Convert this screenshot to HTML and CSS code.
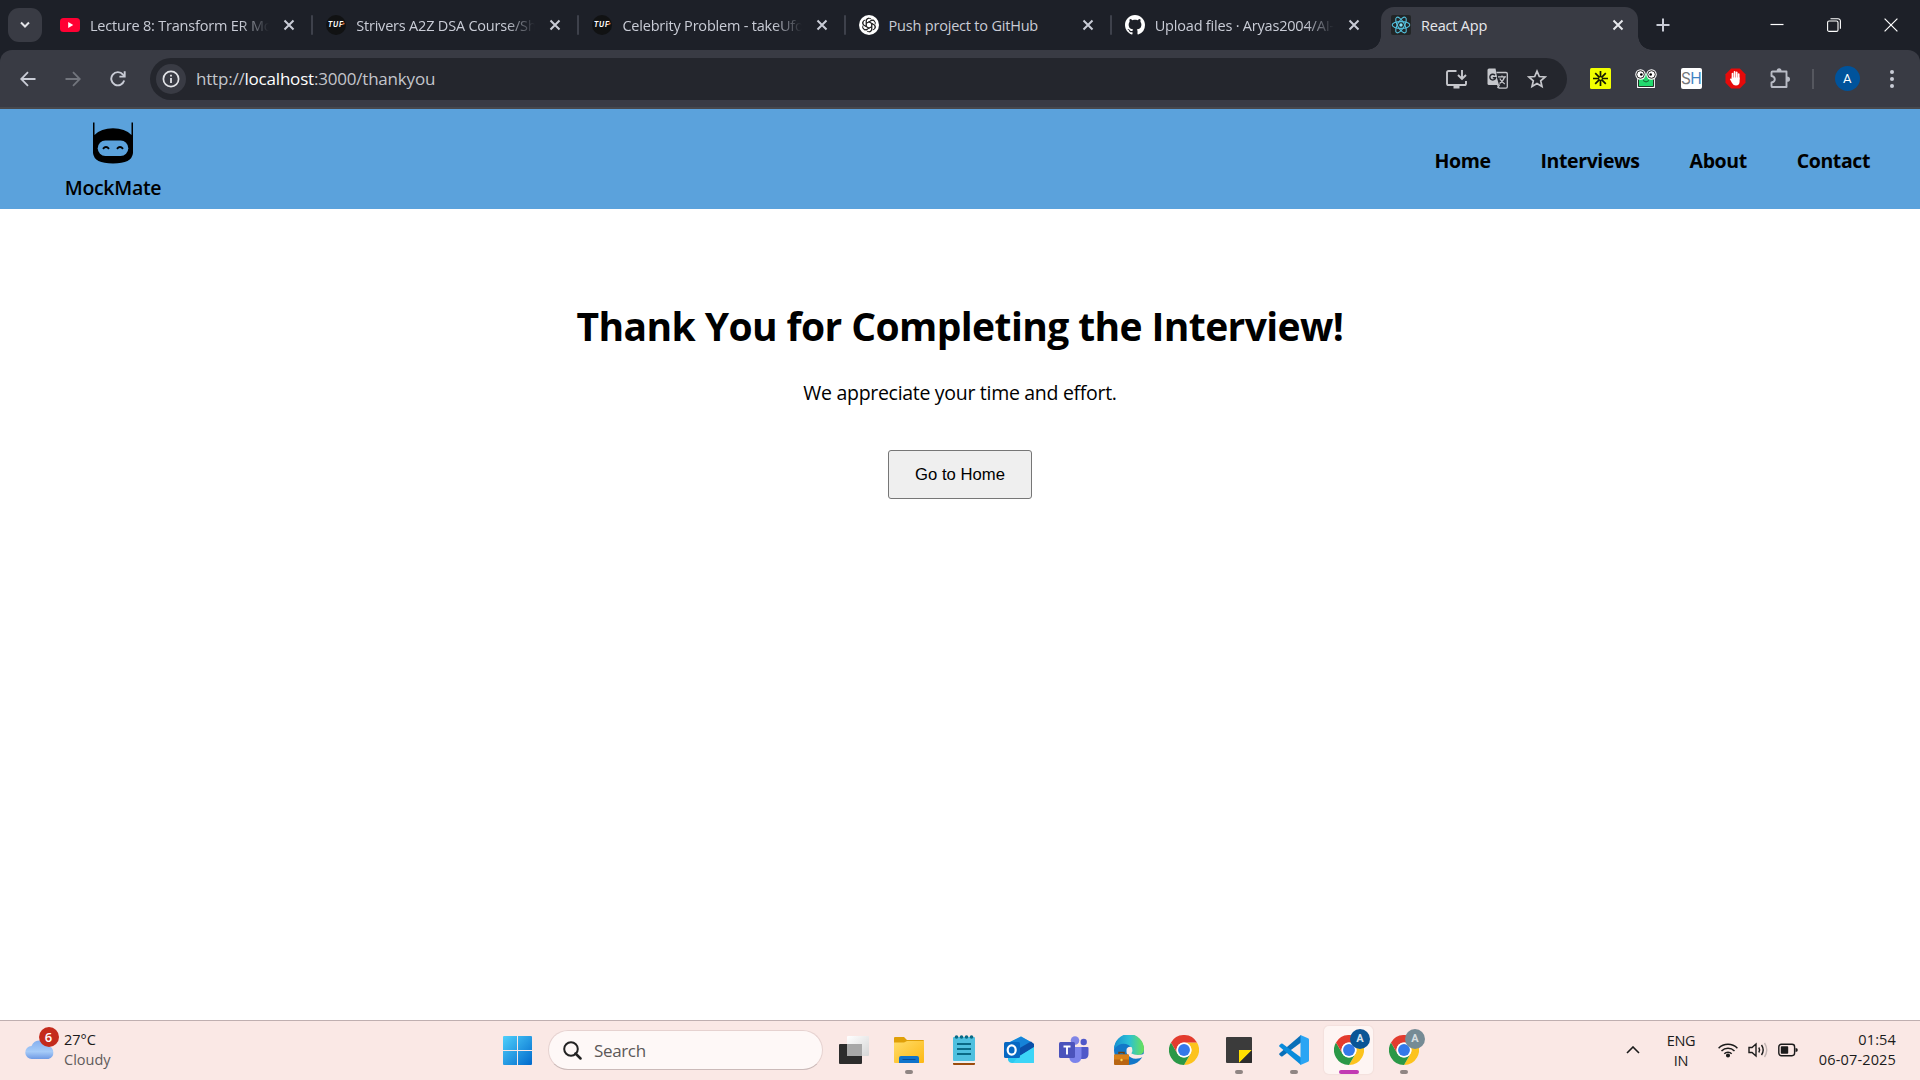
FILE: index.html
```html
<!DOCTYPE html>
<html lang="en">
<head>
<meta charset="utf-8">
<title>React App</title>
<link rel="stylesheet" href="styles.css">
</head>
<body>
<svg class="defs" aria-hidden="true">
  <symbol id="close" viewBox="0 0 12 12"><path d="M1.5 1.5l9 9M10.5 1.5l-9 9" fill="none" stroke="currentColor" stroke-width="2"/></symbol>
  <symbol id="tuf" viewBox="0 0 20 20"><circle cx="10" cy="10" r="10" fill="#111213"/><text x="1.8" y="12.3" font-size="7" font-style="italic" font-weight="700" font-family="Inter, sans-serif" fill="#fff" textLength="15">TUF</text><circle cx="17.6" cy="8.6" r="1.1" fill="#d8632c"/></symbol>
  <symbol id="chrome" viewBox="0 0 48 48">
    <path d="M24 12H44.8A24 24 0 0 1 24 48L34.4 30A12 12 0 0 0 24 12Z" fill="#fcc31d"/>
    <path d="M3.2 12A24 24 0 0 0 24 48L34.4 30A12 12 0 0 1 13.6 30Z" fill="#2a9847"/>
    <path d="M3.2 12 13.6 30A12 12 0 0 1 24 12H44.8A24 24 0 0 0 3.2 12Z" fill="#e33b2e"/>
    <circle cx="24" cy="24" r="12" fill="#fff"/><circle cx="24" cy="24" r="9.5" fill="#3479ea"/>
  </symbol>
</svg>

<div class="browser">
  <div class="tabstrip">
    <div class="tab-search"><svg width="12" height="8" viewBox="0 0 12 8"><path d="M2 1.5l4 4 4-4" fill="none" stroke="#e3e4e8" stroke-width="2"/></svg></div>
    <div class="tab">
      <svg class="fav" viewBox="0 0 20 20"><rect y="3" width="20" height="14" rx="3.5" fill="#ff0033"/><path d="M8.2 7v6l5-3z" fill="#fff"/></svg>
      <span class="title fade">Lecture 8: Transform ER Mod</span><svg class="x"><use href="#close"/></svg>
    </div>
    <div class="tab">
      <svg class="fav"><use href="#tuf"/></svg>
      <span class="title fade">Strivers A2Z DSA Course/Sh</span><svg class="x"><use href="#close"/></svg>
    </div>
    <div class="tab">
      <svg class="fav"><use href="#tuf"/></svg>
      <span class="title fade">Celebrity Problem - takeUfo</span><svg class="x"><use href="#close"/></svg>
    </div>
    <div class="tab">
      <svg class="fav" viewBox="0 0 20 20"><circle cx="10" cy="10" r="10" fill="#fff"/><g fill="none" stroke="#222" stroke-width=".95">
        <path id="petal" d="M7.3 11.6V6.1a2.9 2.9 0 0 1 5.2-1.7M7.3 8.3l4.8-2.7a2.6 2.6 0 0 1 3.8 1"/>
        <use href="#petal" transform="rotate(60 10 10)"/><use href="#petal" transform="rotate(120 10 10)"/><use href="#petal" transform="rotate(180 10 10)"/><use href="#petal" transform="rotate(240 10 10)"/><use href="#petal" transform="rotate(300 10 10)"/></g></svg>
      <span class="title">Push project to GitHub</span><svg class="x"><use href="#close"/></svg>
    </div>
    <div class="tab last">
      <svg class="fav" viewBox="0 0 16 16"><path fill="#fff" d="M8 0C3.58 0 0 3.58 0 8c0 3.54 2.29 6.53 5.47 7.59.4.07.55-.17.55-.38 0-.19-.01-.82-.01-1.49-2.01.37-2.53-.49-2.69-.94-.09-.23-.48-.94-.82-1.13-.28-.15-.68-.52-.01-.53.63-.01 1.08.58 1.23.82.72 1.21 1.87.87 2.33.66.07-.52.28-.87.51-1.07-1.78-.2-3.64-.89-3.64-3.95 0-.87.31-1.59.82-2.15-.08-.2-.36-1.02.08-2.12 0 0 .67-.21 2.2.82.64-.18 1.32-.27 2-.27s1.36.09 2 .27c1.53-1.04 2.2-.82 2.2-.82.44 1.1.16 1.92.08 2.12.51.56.82 1.27.82 2.15 0 3.07-1.87 3.75-3.65 3.95.29.25.54.73.54 1.48 0 1.07-.01 1.93-.01 2.2 0 .21.15.46.55.38A8.01 8.01 0 0 0 16 8c0-4.42-3.58-8-8-8z"/></svg>
      <span class="title fade">Upload files · Aryas2004/AI-</span><svg class="x"><use href="#close"/></svg>
    </div>
    <div class="tab active">
      <svg class="fav" viewBox="0 0 20 20"><rect width="20" height="20" rx="2" fill="#222526"/><g fill="none" stroke="#53c1de" stroke-width="1.1"><ellipse cx="10" cy="10" rx="8.8" ry="3.4"/><ellipse cx="10" cy="10" rx="8.8" ry="3.4" transform="rotate(60 10 10)"/><ellipse cx="10" cy="10" rx="8.8" ry="3.4" transform="rotate(120 10 10)"/></g><circle cx="10" cy="10" r="1.7" fill="#7fe3f8"/></svg>
      <span class="title">React App</span><svg class="x"><use href="#close"/></svg>
    </div>
    <div class="new-tab"><svg width="14" height="14" viewBox="0 0 14 14"><path d="M7 .5v13M.5 7h13" stroke="#c9ccd6" stroke-width="2"/></svg></div>
    <div class="window-buttons">
      <svg width="14" height="14" viewBox="0 0 14 14"><path d="M.5 6.5h13" stroke="#fff" stroke-width="1.2"/></svg>
      <svg width="14" height="14" viewBox="0 0 14 14" fill="none" stroke="#fff" stroke-width="1.1"><rect x=".6" y="3" width="10.4" height="10.4" rx="1.5"/><path d="M3.5 .7H11a2.4 2.4 0 0 1 2.4 2.4v7.6"/></svg>
      <svg width="14" height="14" viewBox="0 0 14 14"><path d="M.6.6l12.8 12.8M13.4.6.6 13.4" stroke="#fff" stroke-width="1.2"/></svg>
    </div>
  </div>

  <div class="toolbar">
    <div class="nav-buttons">
      <svg width="16" height="16" viewBox="0 0 16 16" fill="none" stroke="#c9ccd6" stroke-width="1.8"><path d="M15.5 8H1.5M8 1.2 1.2 8 8 14.8"/></svg>
      <svg width="16" height="16" viewBox="0 0 16 16" fill="none" stroke="#72757d" stroke-width="1.8"><path d="M.5 8h14M8 1.2 14.8 8 8 14.8"/></svg>
      <svg width="16" height="16" viewBox="0 0 16 16" fill="none" stroke="#c9ccd6" stroke-width="1.9"><path d="M14.2 9.6A6.6 6.6 0 1 1 13 3.6L14.2 5"/><path d="M14.7.3v5.3H9.4"/></svg>
    </div>
    <div class="omnibox">
      <span class="info"><svg width="18" height="18" viewBox="0 0 18 18"><circle cx="9" cy="9" r="7.6" fill="none" stroke="#e2e3e7" stroke-width="1.7"/><path d="M9 8v5M9 4.8v1.8" stroke="#e2e3e7" stroke-width="1.8"/></svg></span>
      <span class="url">http://<b>localhost</b>:3000/thankyou</span>
      <div class="omni-icons">
        <svg width="21" height="20" viewBox="0 0 21 20" fill="none" stroke="#c6c7cc" stroke-width="1.9"><path d="M10.5 2H2.6Q1 2 1 3.6V14.4Q1 16 2.6 16H18.4Q20 16 20 14.4V12M16 1v8.5M12 6l4 4 4-4"/><path d="M7.5 18h6" stroke-width="3"/></svg>
        <svg width="21" height="21" viewBox="0 0 21 21"><path d="M2 .5h6.500l3.500 16.500H2Q.5 17 .5 15.500V2Q.5.5 2 .5Z" fill="#c6c7cc"/><path d="M9.500 4.500h9.500q1.300 0 1.300 1.300v13q0 1.300-1.300 1.300h-7l-1.500-3.500" fill="#24262d" stroke="#c6c7cc" stroke-width="1.300"/><path d="M8 3.500 12 17H7Z" fill="#c6c7cc"/><path d="M8 7.200A2.900 2.900 0 1 0 8.600 9.800H5.800" fill="none" stroke="#24262d" stroke-width="1.400"/><path d="M11 8.800h8M15 7.500v1.300M17.500 9q-1 4-5 6.500M12.800 10.500q2 4 5 5.500M10.500 20l2.300-3.500" fill="none" stroke="#c6c7cc" stroke-width="1.200"/></svg>
        <svg width="20" height="20" viewBox="0 0 20 20"><path d="M10 2.200l2.300 5.300 5.800.5-4.400 3.800 1.300 5.700-5-3-5 3 1.300-5.700L1.900 8l5.800-.5z" fill="none" stroke="#c6c7cc" stroke-width="1.700"/></svg>
      </div>
    </div>
    <div class="extensions">
      <svg width="21" height="21" viewBox="0 0 21 21"><rect width="21" height="21" rx="1.500" fill="#f1ff00"/><g stroke="#141a00" stroke-width="1.700"><path d="M10.500 3v15M3 10.500h15M5.200 5.200l10.600 10.600M15.800 5.200 5.200 15.800"/></g><circle cx="10.500" cy="10.500" r="1.300" fill="#f1ff00"/></svg>
      <svg width="22" height="20" viewBox="0 0 22 20"><path d="M4.500 9H17.500L18.500 11V17.500H3.500V11Z" fill="#22d96e" stroke="#fff" stroke-width="2.800"/><path d="M4.500 9H17.500L18.500 11V17.500H3.500V11Z" fill="#22d96e" stroke="#172019" stroke-width=".9"/><path d="M7 9 11 4l4 5v3H7z" fill="#22d96e"/><g fill="#fff"><circle cx="5.500" cy="5.500" r="5.200"/><circle cx="16.500" cy="5.500" r="5.200"/></g><g fill="#fff" stroke="#222" stroke-width="1"><circle cx="5.500" cy="5.500" r="3.800"/><circle cx="16.500" cy="5.500" r="3.800"/></g><circle cx="6.300" cy="5.500" r="1.300"/><circle cx="15.700" cy="5.500" r="1.300"/><path d="M8 11.500q3 3 6 0" fill="none" stroke="#155c31"/></svg>
      <span class="sh"><i>S</i>H</span>
      <svg width="21" height="21" viewBox="0 0 21 21"><path d="M6.200.5h8.600l5.700 5.700v8.600l-5.700 5.700H6.200L.5 14.800V6.200z" fill="#e60a0a"/><path d="M7.500 11V5.500M9.600 10V3.800M11.700 10V4.300M13.700 11V6" stroke="#fff" stroke-width="1.700" stroke-linecap="round"/><path d="M6.700 9.500h7.900v4q0 4-3.600 4-2.600 0-4-2.500L4.800 11q.8-1.200 1.900 0z" fill="#fff"/></svg>
      <svg width="21" height="21" viewBox="0 0 21 21"><path d="M2.500 3.500H16.500V19H2.500Q1.500 19 1.500 18V14.500Q4.800 14 4.800 11.300T1.500 8V4.500Q1.500 3.500 2.500 3.500Z" fill="none" stroke="#b9bcc6" stroke-width="1.900" stroke-linejoin="round"/><path d="M6.700 3a2.400 2.700 0 0 1 4.800 0zM17 8.600a3 2.600 0 0 1 0 5.200z" fill="#b9bcc6"/></svg>
    </div>
    <span class="bar"></span>
    <span class="avatar">A</span>
    <svg class="dots" width="4" height="18" viewBox="0 0 4 18" fill="#c9ccd6"><circle cx="2" cy="2" r="2"/><circle cx="2" cy="9" r="2"/><circle cx="2" cy="16" r="2"/></svg>
  </div>
</div>

<header class="site-header">
  <div class="brand">
    <svg width="42" height="42" viewBox="0 0 42 42"><path d="M1 .5h1.500V13Q9 6.300 21 6.300T39.500 13V.5H41V31Q40 41.500 21 41.500T1 31Z"/><rect x="5.700" y="18.500" width="30.600" height="15.500" rx="7.700" fill="#5ba2dc"/><path d="M11 26.800q3-3.500 6 0M25 26.800q3-3.500 6 0" fill="none" stroke="#000" stroke-width="2"/></svg>
    <span>MockMate</span>
  </div>
  <nav><a>Home</a><a>Interviews</a><a>About</a><a>Contact</a></nav>
</header>

<main>
  <h1>Thank You for Completing the Interview!</h1>
  <p>We appreciate your time and effort.</p>
  <button type="button">Go to Home</button>
</main>

<footer class="taskbar">
  <div class="weather">
    <div class="cloud">
      <svg width="30" height="22" viewBox="0 0 30 22"><defs><linearGradient id="cl" x2="0" y2="1"><stop stop-color="#86b0ef"/><stop offset=".6" stop-color="#a6cbf8"/><stop offset="1" stop-color="#6f9ae4"/></linearGradient></defs><path d="M7 21a6.500 6.500 0 0 1-.5-13A9 9 0 0 1 23 8a6.700 6.700 0 0 1 .5 13z" fill="url(#cl)"/></svg>
      <span class="alert">6</span>
    </div>
    <div class="two"><span>27°C</span><span class="grey">Cloudy</span></div>
  </div>
  <div class="apps">
    <div class="app"><svg width="29" height="29" viewBox="0 0 29 29"><defs><linearGradient id="win" gradientUnits="userSpaceOnUse" x2="29" y2="29"><stop stop-color="#4fd0fb"/><stop offset="1" stop-color="#0069cc"/></linearGradient></defs><path d="M1 0h13v14H0V1q0-1 1-1ZM15 0h13q1 0 1 1v13H15zM0 15h14v14H1q-1 0-1-1zM15 15h14v13q0 1-1 1H15z" fill="url(#win)"/></svg></div>
    <div class="search"><svg width="19" height="19" viewBox="0 0 19 19" fill="none" stroke="#222" stroke-width="2"><circle cx="8" cy="8" r="6.800"/><path d="M12.500 12.500l5 5" stroke-width="2.500" stroke-linecap="round"/></svg><span>Search</span></div>
    <div class="app"><svg width="30" height="30" viewBox="0 0 30 30"><defs><linearGradient id="tv" x2="1" y2="1"><stop stop-color="#fff"/><stop offset="1" stop-color="#d6d6d6"/></linearGradient></defs><rect y="9" width="23" height="20" rx="1" fill="#2c2c2c"/><rect x="8" y="1" width="22" height="20" rx="1" fill="url(#tv)"/><rect x="8" y="9" width="15" height="12" fill="#a8a8a8"/></svg></div>
    <div class="app run"><svg width="30" height="30" viewBox="0 0 30 30"><defs><linearGradient id="fo" x2="1" y2="1"><stop stop-color="#ffdc68"/><stop offset="1" stop-color="#fdb813"/></linearGradient></defs><path d="M0 3Q0 2 1 2h9l3 3h16q1 0 1 1v6H0z" fill="#e0a008"/><path d="M0 7.500h10L13 6h17v21q0 1-1 1H1q-1 0-1-1z" fill="url(#fo)"/><path d="M5 28v-5q0-2 2-2h16q2 0 2 2v5z" fill="#0f73cb"/><path d="M8.500 24.500h13" stroke="#0a4c94"/></svg></div>
    <div class="app"><svg width="24" height="30" viewBox="0 0 24 30"><rect x="1" y="26" width="22" height="4" rx="1" fill="#9b4b0b"/><rect x="1" y="25" width="22" height="3" fill="#eee"/><rect x="1" y="2" width="22" height="24" rx="1" fill="#4fc0df"/><path d="M5 9h14M5 14h14M5 19h14" stroke="#0a6a86" stroke-width="1.800"/><g fill="#0a6a86"><circle cx="4.500" cy="2" r="1.800"/><circle cx="9.500" cy="2" r="1.800"/><circle cx="14.500" cy="2" r="1.800"/><circle cx="19.500" cy="2" r="1.800"/></g></svg></div>
    <div class="app"><svg width="30" height="30" viewBox="0 0 30 30"><path d="M4 8 17 1.500 30 9v18q0 1-1 1H8q-3 0-4-3z" fill="#2cc9f0"/><path d="M4 8 17 1.500 27 7 14 16 4 20z" fill="#1683d8"/><path d="M14 14 27 6.500 30 9v3.500L14 22z" fill="#0b4fa8"/><path d="M14 22 30 12v15q0 1-1 1H9z" fill="#3cd5f7"/><rect y="7" width="16" height="16" rx="1.500" fill="#0768c2"/><ellipse cx="7.700" cy="15" rx="4" ry="4.600" fill="none" stroke="#fff" stroke-width="2.200"/></svg></div>
    <div class="app"><svg width="30" height="30" viewBox="0 0 30 30"><circle cx="16" cy="5.500" r="4.300" fill="#8085e6"/><circle cx="24.700" cy="7" r="3.200" fill="#5059c9"/><path d="M20 12h8.500q1 0 1 1v6q0 5-5 5h-4.500z" fill="#5059c9"/><path d="M10 12h12.500v9q0 7-6 7-5.500 0-6.500-6z" fill="#7b83eb"/><rect y="7" width="16" height="16" rx="1.500" fill="#4b53bc"/><path d="M4.500 11.500h7M8 11.500V19.500" stroke="#fff" stroke-width="1.900"/></svg></div>
    <div class="app"><svg width="30" height="30" viewBox="0 0 30 30"><defs><linearGradient id="ed"><stop stop-color="#168fd0"/><stop offset=".5" stop-color="#2bbfd6"/><stop offset="1" stop-color="#6be255"/></linearGradient></defs><circle cx="15" cy="15" r="15" fill="#1277c8"/><path d="M0 14A15 15 0 0 1 30 14q0 6-6.500 6-4 0-6-1.500 2-5-3-8.500Q7 6 0 14Z" fill="url(#ed)"/><path d="M12.500 16a3.500 3.500 0 0 1 5.500-3.500q1 3-.5 6Q22 21 30 19v2.500q-8 4-13 1t-4.500-6.500Z" fill="#fbe9e6"/><rect y="19.500" width="15" height="10.500" rx="1" fill="#b86512"/><path d="M0 20.500q0-1 1-1h13q1 0 1 1v4H0z" fill="#d98018"/><path d="M5 19v-1.500h5V19" fill="none" stroke="#704010" stroke-width="1.500"/><circle cx="7.500" cy="25" r="1.200" fill="#ffd659"/></svg></div>
    <div class="app"><svg width="30" height="30"><use href="#chrome"/></svg></div>
    <div class="app run"><svg width="26" height="26" viewBox="0 0 26 26"><rect width="26" height="26" rx="1" fill="#3b3b3b"/><path d="M13 13h13L13 26z" fill="#ffe000"/><path d="M26 13v12q0 1-1 1H13z" fill="#2c2c2c"/></svg></div>
    <div class="app run"><svg width="30" height="30" viewBox="0 0 30 30"><path d="M.6 18.200Q-.3 19 .6 20L2 21.200q.8.500 1.600 0L22 7.500V0Z" fill="#0a6fb8"/><path d="M.6 11.800Q-.3 11 .6 10L2 8.800q.8-.5 1.600 0L22 22.500V30Z" fill="#0a8bdb"/><path d="M21.500 0 29 3.300q1 .4 1 1.500v20.400q0 1.100-1 1.500L21.500 30Z" fill="#2aa5f4"/></svg></div>
    <div class="app run current"><svg width="30" height="30"><use href="#chrome"/></svg><span class="badge">A</span></div>
    <div class="app run"><svg width="30" height="30"><use href="#chrome"/></svg><span class="badge grey-badge">A</span></div>
  </div>
  <div class="tray">
    <svg class="chev" width="14" height="8" viewBox="0 0 14 8"><path d="M1 7l6-6 6 6" fill="none" stroke="#1b1b1b" stroke-width="1.600"/></svg>
    <div class="two lang"><span>ENG</span><span>IN</span></div>
    <svg width="20" height="16" viewBox="0 0 20 16" fill="none" stroke="#1b1b1b" stroke-width="1.500"><path d="M.6 6.200a13.300 13.300 0 0 1 18.800 0M3.500 9a9.200 9.200 0 0 1 13 0M6.300 11.700a5.200 5.200 0 0 1 7.400 0"/><circle cx="10" cy="13.500" r="1.300" fill="#1b1b1b"/></svg>
    <svg class="vol" width="20" height="16" viewBox="0 0 20 16" fill="none" stroke="#1b1b1b" stroke-width="1.400"><path d="M1 5.500h3L8 2v12l-4-3.500H1zM10.800 5.500q1.600 2.500 0 5M13.500 3q3.400 5 0 10"/><path d="M16.500 1q4.500 7 0 14" stroke="#c3b6b4"/></svg>
    <svg class="bat" width="20" height="14" viewBox="0 0 20 14"><rect x=".8" y="1.300" width="15.800" height="11.400" rx="2.600" fill="none" stroke="#1b1b1b" stroke-width="1.400"/><rect x="2.800" y="3.300" width="7.400" height="7.400" rx=".8" fill="#1b1b1b"/><path d="M17.500 5q2.300 0 2.300 2t-2.300 2z" fill="#1b1b1b"/></svg>
    <div class="two clock"><span>01:54</span><span>06-07-2025</span></div>
  </div>
</footer>
</body>
</html>
```
FILE: styles.css
```css
* { box-sizing: border-box; }
body {
  margin: 0;
  height: 1080px;
  display: flex;
  flex-direction: column;
  overflow: hidden;
  background: #fff;
  color: #000;
  font-family: "Open Sans", "Noto Sans", sans-serif;
}
svg { display: block; flex: none; }
.defs { position: absolute; width: 0; height: 0; }

/* browser chrome */
.browser { height: 109px; background: #1d2028; border-bottom: 2px solid #47484c; flex: none; }
.tabstrip { display: flex; height: 50px; padding-left: 8px; align-items: flex-start; }
.tab-search {
  width: 34px; height: 34px; margin: 8px 8px 0 0;
  border-radius: 11px; background: #393b44;
  display: flex; align-items: center; justify-content: center;
}
.tab {
  position: relative;
  width: 266.2px; height: 50px; padding: 0 21px 0 10px;
  display: flex; align-items: center; flex: none;
  font-size: 14.5px; letter-spacing: -.2px; color: #c9ccd6;
}
.tab:not(.last):not(.active)::after {
  content: ""; position: absolute; right: 3px; top: 15px;
  width: 2px; height: 20px; border-radius: 1px; background: #3e414b;
}
.fav { width: 20px; height: 20px; margin-right: 10px; }
.title { flex: 1; min-width: 0; white-space: nowrap; overflow: hidden; line-height: 24px; }
.tab .title { margin: 1px 14px 0 0; }
.fade { -webkit-mask-image: linear-gradient(90deg, #000 84%, transparent 100%); mask-image: linear-gradient(90deg, #000 84%, transparent 100%); }
.x { width: 12px; height: 12px; color: #c9ccd6; }
.active {
  width: 257px; height: 43px; margin-top: 7px; padding: 0 14px 7px 10px;
  background: #393b44; border-radius: 13px 13px 0 0; color: #e7e8ec;
}
.active .x { color: #e7e8ec; }
.active::before, .active::after {
  content: ""; position: absolute; bottom: 0; width: 14px; height: 14px;
}
.active::before { left: -14px; background: radial-gradient(circle at 0 0, transparent 13.5px, #393b44 14px); }
.active::after { right: -14px; background: radial-gradient(circle at 100% 0, transparent 13.5px, #393b44 14px); }
.new-tab { margin: 18px 0 0 18px; }
.window-buttons { display: flex; gap: 43px; margin: 17.5px 22px 0 auto; }

.toolbar {
  display: flex; align-items: center; height: 57px;
  background: #393b44; border-radius: 12px 12px 0 0;
}
.nav-buttons { display: flex; gap: 29px; width: 150px; padding-left: 20px; }
.omnibox {
  width: 1417px; height: 42px; border-radius: 21px; background: #24262d;
  display: flex; align-items: center; padding: 0 20px 0 6px;
}
.info {
  width: 30px; height: 30px; border-radius: 50%; background: #393b44;
  display: flex; align-items: center; justify-content: center;
}
.url { margin: 1px 0 0 10px; font-size: 17px; letter-spacing: -.2px; color: #c3c5cb; flex: 1; line-height: 24px; }
.url b { font-weight: 400; color: #fff; }
.omni-icons { display: flex; gap: 19.5px; align-items: center; }
.extensions { display: flex; align-items: center; gap: 23.8px; margin-left: 23px; }
.sh {
  width: 21px; height: 21px; background: #fff; border-radius: 2px;
  font: 15.5px/21px Inter, sans-serif; letter-spacing: -.6px; color: #3f83c4; text-align: center;
}
.sh i { font-style: normal; color: #77797c; }
.bar { width: 2px; height: 20px; margin: 0 20.5px 0 21px; background: #55575f; }
.avatar {
  width: 25px; height: 25px; border-radius: 50%; background: #00539b; color: #fff;
  font: 13px/26px Roboto, sans-serif; text-align: center;
}
.dots { margin-left: 30.5px; }

/* site */
.site-header {
  height: 100px; padding: 0 50px 0 64px; flex: none; background: #5ba2dc;
  display: flex; justify-content: space-between; align-items: center;
}
.brand { width: 98px; display: flex; flex-direction: column; align-items: center; font-size: 19.5px; font-weight: 600; letter-spacing: -.3px; line-height: 28px; }
.brand span { margin-top: 10px; }
.brand svg { margin-top: 6px; }
nav { display: flex; gap: 50px; margin-top: 3px; font-size: 19.5px; font-weight: 700; letter-spacing: -.4px; }
main { flex: 1; display: flex; flex-direction: column; align-items: center; padding-top: 87px; }
h1 { margin: 0; font-size: 39px; line-height: 60px; letter-spacing: -.6px; font-weight: 700; }
p { margin: 22px 0 0; font-size: 19.5px; line-height: 30px; letter-spacing: -.3px; }
button {
  margin: 42px 0 0; width: 144px; height: 49px; padding: 0;
  font: 16.67px "Liberation Sans", Arial, sans-serif; color: #000;
  background: #efefef; border: 1px solid #767676; border-radius: 3px;
}

/* taskbar */
.taskbar {
  display: grid; grid-template-columns: 490px 1fr auto; height: 60px; flex: none;
  background: #fae8e5; border-top: 1px solid #bfafb0; color: #1b1b1b;
}
.weather { display: flex; padding: 9px 0 0 25px; }
.cloud { position: relative; width: 30px; height: 40px; padding-top: 8px; }
.alert {
  position: absolute; left: 13.5px; top: -3px; width: 20px; height: 20px; border-radius: 50%;
  background: #c42b1c; color: #fff; font-size: 13px; line-height: 20px; text-align: center; font-weight: 600;
}
.two { display: flex; flex-direction: column; font-size: 14.5px; line-height: 20px; letter-spacing: 0; }
.weather .two { margin-left: 9px; }
.grey { color: #5f5b5b; }
.apps { display: flex; align-items: center; height: 58px; }
.app { position: relative; width: 55px; height: 48px; display: flex; align-items: center; justify-content: center; }
.search {
  display: flex; align-items: center; gap: 12px; width: 275px; height: 40px; margin: 0 3px; padding: 0 14px;
  border: 1px solid #e6d2d0; border-bottom-color: #cbbab9; border-radius: 20px; background: #fef8f7;
  font-size: 17px; letter-spacing: -.35px; color: #5c5858;
}
.run::after { content: ""; position: absolute; left: 24px; bottom: 0; width: 8px; height: 4px; border-radius: 2px; background: #8f8583; }
.current::before { content: ""; position: absolute; inset: 0 3px; border-radius: 5px; background: #fef5f3; box-shadow: 0 0 1px 1px #f3e0dd; }
.current svg { position: relative; }
.current::after { left: 18px; width: 20px; background: #c239b3; }
.badge {
  position: absolute; left: 29px; top: 3px; width: 20px; height: 20px; border-radius: 50%;
  background: #0a5596; color: #d5e3f0; font: 700 11px/20px Roboto, sans-serif; text-align: center;
}
.grey-badge { background: #758b95; color: #d5dde0; }
.tray { display: flex; align-items: center; height: 58px; padding-right: 24px; }
.chev { margin-right: 27px; }
.lang { width: 28px; align-items: center; margin-right: 23px; letter-spacing: -.3px; padding-top: 1px; }
.vol { margin-left: 10px; }
.bat { margin-left: 10px; }
.clock { width: 78px; margin-left: 20px; align-items: flex-end; letter-spacing: .15px; white-space: nowrap; }
```
